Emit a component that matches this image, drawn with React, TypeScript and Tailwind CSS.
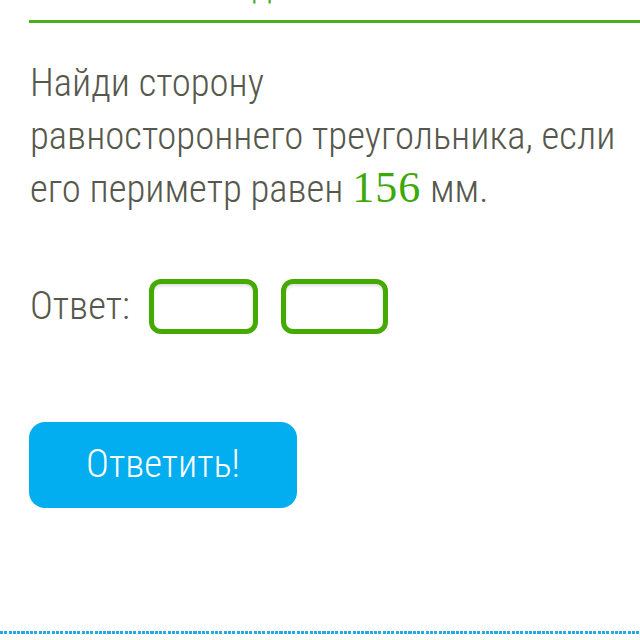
export default function App() {
  return (
    <div className="w-[640px] h-[640px] bg-white overflow-hidden flex flex-col font-['Roboto',sans-serif] font-stretch-condensed">
      {/* cut-off heading above the fold: only the descender shows */}
      <div className="h-[4px] overflow-hidden flex items-end pl-[252px]">
        <span className="text-[#4cae1c] text-[40px] leading-none font-light">д</span>
      </div>
      <div className="h-[3px] mt-[16px] ml-[29px] bg-[#4cae1c]" />

      <div className="pl-[30px] pr-[10px] pt-[34px]">
        <p className="text-[38.75px] leading-[52.5px] font-light text-[#56584c] whitespace-nowrap">
          Найди сторону
          <br />
          равностороннего треугольника, если
          <br />
          его периметр равен{' '}
          <span className="font-['Liberation_Serif',serif] text-[44px] tracking-[1px] text-[#3da80a] font-normal">156</span>{' '}
          мм.
        </p>

        <div className="flex items-center mt-[63px]">
          <span className="text-[38.75px] font-light text-[#56584c] leading-none mr-[19px]">Ответ:</span>
          <input className="w-[109px] h-[55px] border-[5px] border-[#44aa00] rounded-[12px] shadow-[inset_0_2px_3px_rgba(0,0,0,0.12)] outline-none" />
          <input className="w-[107px] h-[55px] border-[5px] border-[#44aa00] rounded-[12px] shadow-[inset_0_2px_3px_rgba(0,0,0,0.12)] outline-none ml-[23px]" />
        </div>

        <button className="mt-[88px] -ml-px w-[268px] h-[86px] rounded-[16px] bg-[#02aeef] text-white text-[38.75px] font-light">
          Ответить!
        </button>
      </div>

      <div className="mt-auto mb-[6px] h-[3px] bg-[repeating-linear-gradient(90deg,#29a9e0_0_3px,transparent_3px_4.3px)]" />
    </div>
  );
}
